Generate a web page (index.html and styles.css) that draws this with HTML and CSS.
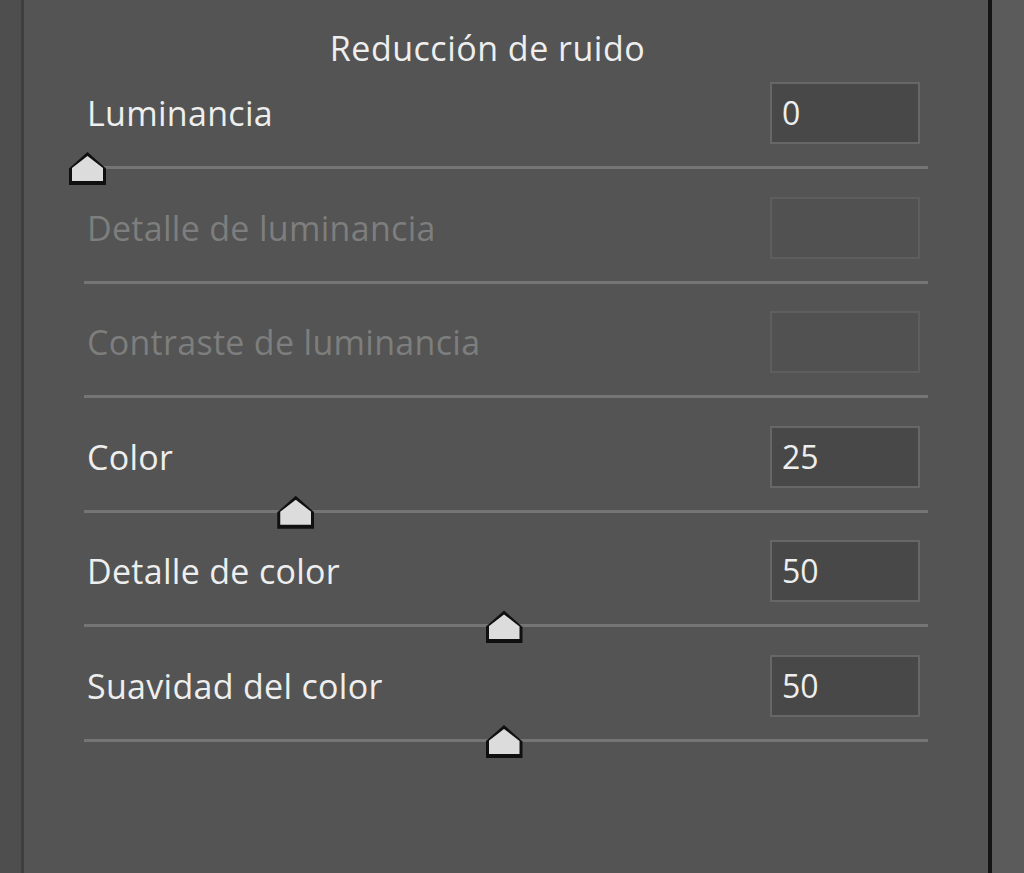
FILE: index.html
```html
<!DOCTYPE html>
<html>
<head>
<meta charset="utf-8">
<title>Reducción de ruido</title>
<link rel="stylesheet" href="styles.css">
</head>
<body>
<div class="frame">
<div class="edge-left"></div>
<div class="panel">
<div class="title">Reducción de ruido</div>

<div class="row">
<div class="head">
<span class="label">Luminancia</span>
<span class="box">0</span>
</div>
<div class="slider">
<div class="track"></div>
<div class="thumb" style="left: 0%"></div>
</div>
</div>

<div class="row off">
<div class="head">
<span class="label">Detalle de luminancia</span>
<span class="box"></span>
</div>
<div class="slider">
<div class="track"></div>
</div>
</div>

<div class="row off">
<div class="head">
<span class="label">Contraste de luminancia</span>
<span class="box"></span>
</div>
<div class="slider">
<div class="track"></div>
</div>
</div>

<div class="row">
<div class="head">
<span class="label">Color</span>
<span class="box">25</span>
</div>
<div class="slider">
<div class="track"></div>
<div class="thumb" style="left: 25%"></div>
</div>
</div>

<div class="row">
<div class="head">
<span class="label">Detalle de color</span>
<span class="box">50</span>
</div>
<div class="slider">
<div class="track"></div>
<div class="thumb" style="left: 50%"></div>
</div>
</div>

<div class="row">
<div class="head">
<span class="label">Suavidad del color</span>
<span class="box">50</span>
</div>
<div class="slider">
<div class="track"></div>
<div class="thumb" style="left: 50%"></div>
</div>
</div>
</div>
<div class="edge-right"></div>
</div>
</body>
</html>
```
FILE: styles.css
```css
body{
	margin: 0;
	background-color: #535453;
	font-family: "Open Sans", "Noto Sans", sans-serif;
	color: #eeeeee;
}
.frame{
	display: flex;
	height: 873px;
	overflow: hidden;
}
.edge-left{
	width: 21px;
	background-color: #4d4e4d;
	border-right: 3px solid #3d3e3d;
}
.edge-right{
	width: 32px;
	background-color: #5a5b5a;
	border-left: 4px solid #141414;
}
.panel{
	flex: 1;
	padding: 0 60px;
}
.title{
	font-size: 34px;
	letter-spacing: 0.5px;
	text-align: center;
	padding-top: 27px;
	height: 55px;
	margin-right: 37px;
	line-height: 42px;
}
.row{
	height: 114.6px;
}
.head{
	display: flex;
	justify-content: space-between;
	align-items: center;
	padding: 0 8px 0 3px;
}
.label{
	font-size: 34px;
	letter-spacing: 0.3px;
	line-height: 44px;
}
.box{
	box-sizing: border-box;
	width: 150px;
	height: 62px;
	background-color: #474847;
	border: 2px solid #666766;
	padding-left: 10px;
	font-size: 32px;
	line-height: 58px;
}
.slider{
	position: relative;
	height: 52px;
	margin: 0 8px 0 3px;
}
.track{
	position: absolute;
	left: -3px;
	right: -8px;
	top: 22px;
	height: 3px;
	background-color: #747574;
}
.thumb{
	position: absolute;
	top: 8px;
	width: 37px;
	height: 33px;
	margin-left: -18px;
	background-color: #101010;
	clip-path: polygon(50% 0, 100% 50%, 100% 100%, 0 100%, 0 50%);
}
.thumb::after{
	content: "";
	position: absolute;
	left: 3px;
	right: 3px;
	top: 4px;
	bottom: 4px;
	background-color: #dcdcdc;
	clip-path: polygon(50% 0, 100% 48%, 100% 100%, 0 100%, 0 48%);
}
.off .label{
	color: #7d7e7d;
}
.off .box{
	background-color: #505150;
	border-color: #5d5e5d;
}
```
